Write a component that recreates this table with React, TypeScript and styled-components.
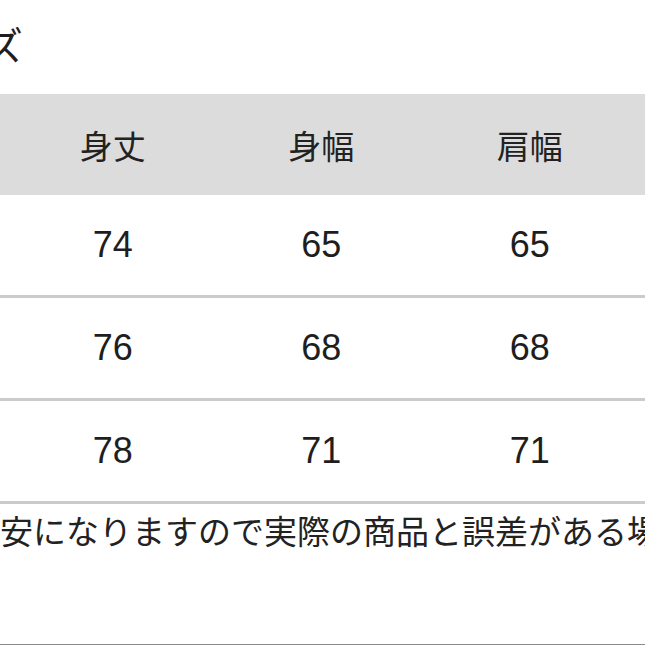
import styled, { createGlobalStyle } from "styled-components";

const GlobalStyle = createGlobalStyle`
    html, body {
        margin: 0;
        padding: 0;
        background: #fff;
        overflow: hidden;
    }
    body {
        font-family: "Liberation Sans", "Noto Sans CJK JP", sans-serif;
        color: #1e1e1e;
    }
`;

const Page = styled.div`
    width: 645px;
    height: 645px;
    box-sizing: border-box;
    overflow: hidden;
    border-bottom: 1px solid #8a8a8a;
    display: flex;
    flex-direction: column;
`;

const Title = styled.h2`
    margin: 18px 0 0 -93px;
    height: 76px;
    font-family: "Noto Sans CJK JP", sans-serif;
    font-size: 39px;
    font-weight: 400;
    line-height: 50px;
    white-space: nowrap;
    color: #1e1e1e;
`;

const Table = styled.div`
    margin-left: -200px;
    display: grid;
    grid-template-columns: repeat(5, 208.5px);
    width: max-content;
`;

const HeadCell = styled.div`
    height: 101px;
    display: flex;
    align-items: center;
    justify-content: center;
    background: #dcdcdc;
    font-family: "Noto Sans CJK JP", sans-serif;
    font-size: 33px;
    color: #222;
`;

const Cell = styled.div`
    height: 100px;
    display: flex;
    align-items: center;
    justify-content: center;
    border-bottom: 3px solid #cbcbcb;
    font-size: 36px;
    color: #1e1e1e;
`;

const Note = styled.p`
    margin: 2px 0 0 -33px;
    font-family: "Noto Sans CJK JP", sans-serif;
    font-size: 33px;
    line-height: 48px;
    white-space: nowrap;
    color: #222;
`;

const headers = ["サイズ", "身丈", "身幅", "肩幅", "袖丈"];
const rows = [
    ["M", "74", "65", "65", "22"],
    ["L", "76", "68", "68", "23"],
    ["XL", "78", "71", "71", "24"],
];

export default function App() {
    return (
        <Page>
            <GlobalStyle />
            <Title>サイズ</Title>
            <Table>
                {headers.map(h => (
                    <HeadCell key={h}>{h}</HeadCell>
                ))}
                {rows.map(r =>
                    r.map((v, i) => <Cell key={r[0] + i}>{v}</Cell>)
                )}
            </Table>
            <Note>目安になりますので実際の商品と誤差がある場合がございます。</Note>
        </Page>
    );
}
